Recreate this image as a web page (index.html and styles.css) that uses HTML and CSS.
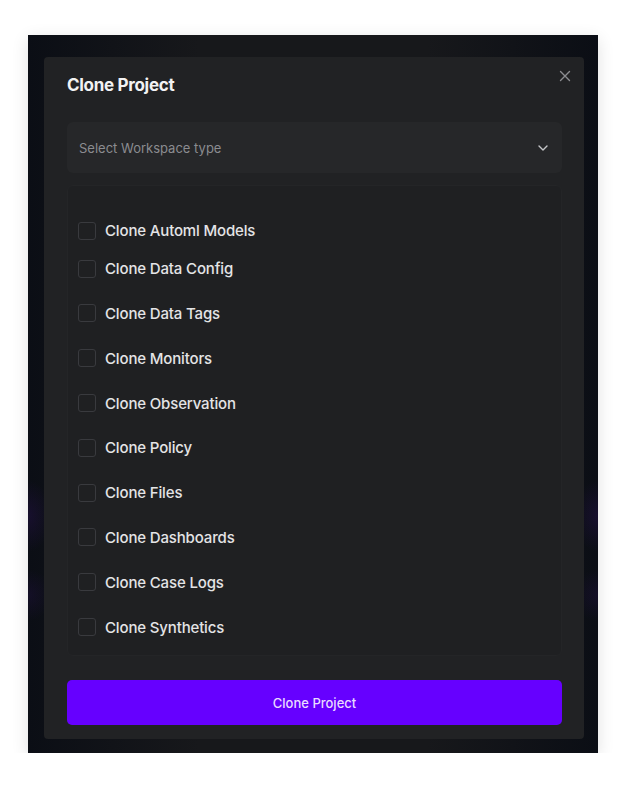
FILE: index.html
```html
<!DOCTYPE html>
<html>
<head>
	<title>Clone Project</title>
	<link rel="stylesheet" href="styles.css">
</head>
<body>

	<div class="backdrop">
		<div class="modal">
			<button class="closeButton" aria-label="Close">
				<svg width="12" height="12" viewBox="0 0 12 12"><path d="M1.5 1.5 L10.5 10.5 M10.5 1.5 L1.5 10.5" stroke="#8c8d91" stroke-width="1.4" stroke-linecap="round"/></svg>
			</button>

			<h2 class="modalTitle">Clone Project</h2>

			<div class="selectBox">
				<span class="placeholder">Select Workspace type</span>
				<svg width="10" height="6" viewBox="0 0 10 6"><path d="M1 1 L5 5 L9 1" fill="none" stroke="#c4c5c8" stroke-width="1.4" stroke-linecap="round" stroke-linejoin="round"/></svg>
			</div>

			<div class="optionList">
				<label class="option first"><span class="checkbox"></span>Clone Automl Models</label>
				<label class="option"><span class="checkbox"></span>Clone Data Config</label>
				<label class="option"><span class="checkbox"></span>Clone Data Tags</label>
				<label class="option"><span class="checkbox"></span>Clone Monitors</label>
				<label class="option"><span class="checkbox"></span>Clone Observation</label>
				<label class="option"><span class="checkbox"></span>Clone Policy</label>
				<label class="option"><span class="checkbox"></span>Clone Files</label>
				<label class="option"><span class="checkbox"></span>Clone Dashboards</label>
				<label class="option"><span class="checkbox"></span>Clone Case Logs</label>
				<label class="option"><span class="checkbox"></span>Clone Synthetics</label>
			</div>

			<button class="submitButton">Clone Project</button>
		</div>
	</div>

</body>
</html>
```

FILE: styles.css
```css
body {
	margin : 0;
	background : #ffffff;
	font-family : Inter, "Noto Sans", sans-serif;
}
.backdrop {
	box-sizing : border-box;
	width : 570px;
	height : 718px;
	margin : 35px 0 0 28px;
	padding : 22px 14px 14px 16px;
	background :
		radial-gradient(ellipse 24px 36px at 0% 67%, rgba(60, 20, 120, 0.25), transparent),
		radial-gradient(ellipse 24px 36px at 100% 67%, rgba(60, 20, 120, 0.25), transparent),
		radial-gradient(ellipse 24px 26px at 0% 78%, rgba(60, 20, 120, 0.18), transparent),
		radial-gradient(ellipse 24px 26px at 100% 78%, rgba(60, 20, 120, 0.18), transparent),
		linear-gradient(to right, #0b0e15, #17181b 30%, #17181b 70%, #0b0e15);
	box-shadow : 0 4px 16px rgba(0, 0, 0, 0.12);
}
.modal {
	position : relative;
	box-sizing : border-box;
	height : 682px;
	padding : 16px 22px 14px 23px;
	background : #212224;
	border-radius : 4px;
	display : flex;
	flex-direction : column;
}
.closeButton {
	position : absolute;
	top : 13px;
	right : 13px;
	width : 12px;
	height : 12px;
	padding : 0;
	border : none;
	background : none;
	display : flex;
}
.modalTitle {
	margin : 0;
	font-size : 17px;
	line-height : 24px;
	font-weight : 700;
	letter-spacing : -0.3px;
	color : #f2f2f3;
}
.selectBox {
	margin-top : 25px;
	height : 51px;
	box-sizing : border-box;
	padding : 0 14px 0 12px;
	background : #262729;
	border-radius : 6px;
	display : flex;
	align-items : center;
	justify-content : space-between;
}
.placeholder {
	font-size : 13px;
	color : #8b8c90;
}
.optionList {
	margin-top : 12px;
	height : 471px;
	box-sizing : border-box;
	padding : 35px 11px 18px 10px;
	background : #1f2022;
	border : 1px solid #242527;
	border-radius : 6px;
	display : flex;
	flex-direction : column;
	gap : 25px;
}
.option {
	display : flex;
	align-items : center;
	gap : 9px;
	height : 20px;
	font-size : 15px;
	font-weight : 500;
	letter-spacing : -0.15px;
	color : #e4e4e6;
}
.option.first {
	margin-bottom : -7px;
}
.checkbox {
	box-sizing : border-box;
	width : 18px;
	height : 18px;
	border : 1.5px solid #393a3e;
	border-radius : 3px;
}
.submitButton {
	margin-top : 24px;
	height : 45px;
	border : none;
	border-radius : 5px;
	background : #6600ff;
	font-family : Inter, "Noto Sans", sans-serif;
	font-size : 13px;
	font-weight : 500;
	color : #e9dcff;
}
```
